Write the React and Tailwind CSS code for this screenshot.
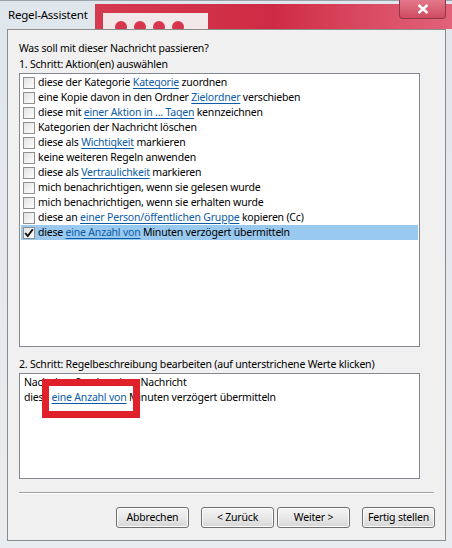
import React from 'react';

const font = { fontFamily: '"Noto Sans", "DejaVu Sans", sans-serif' };

const Link = ({ children }) => (
  <span className="text-[#0a5ca8] underline underline-offset-[2px] decoration-[#0a5ca8]">{children}</span>
);

const actions = [
  [<>diese der Kategorie <Link>Kategorie</Link> zuordnen</>, false],
  [<>eine Kopie davon in den Ordner <Link>Zielordner</Link> verschieben</>, false],
  [<>diese mit <Link>einer Aktion in ... Tagen</Link> kennzeichnen</>, false],
  [<>Kategorien der Nachricht löschen</>, false],
  [<>diese als <Link>Wichtigkeit</Link> markieren</>, false],
  [<>keine weiteren Regeln anwenden</>, false],
  [<>diese als <Link>Vertraulichkeit</Link> markieren</>, false],
  [<>mich benachrichtigen, wenn sie gelesen wurde</>, false],
  [<>mich benachrichtigen, wenn sie erhalten wurde</>, false],
  [<>diese an <Link>einer Person/öffentlichen Gruppe</Link> kopieren (Cc)</>, false],
  [<>diese <Link>eine Anzahl von</Link> Minuten verzögert übermitteln</>, true],
];

const Checkbox = ({ checked }) => (
  <div className="w-[12px] h-[12px] border border-[#8f8f8f] bg-gradient-to-br from-[#e2e2e2] to-white flex items-center justify-center shrink-0">
    {checked && (
      <svg width="10" height="10" viewBox="0 0 10 10">
        <path d="M1.2 5 L3.8 8 L8.8 1.2" fill="none" stroke="#111" strokeWidth="1.9" />
      </svg>
    )}
  </div>
);

const WinButton = ({ children }) => (
  <button className="w-[73px] h-[21px] rounded-[3px] border border-[#707070] bg-gradient-to-b from-[#f4f4f4] via-[#e8e8e8] to-[#d6d6d6] text-[10.5px] tracking-[-0.2px] text-black leading-none whitespace-nowrap shadow-[inset_0_0_0_1px_#fcfcfc]">
    {children}
  </button>
);

export default function App() {
  return (
    <div className="w-[452px] h-[548px] relative overflow-hidden bg-gradient-to-b from-[#dfe6ec] to-[#e9edf0] text-[10.5px] tracking-[-0.2px] text-black" style={font}>
      {/* Title bar (glass with red background behind) */}
      <div className="h-[29px] relative flex">
        <div className="w-[95px] h-full flex items-center pl-[8px] border-t border-[#9aa4ad]">
          <span className="text-[11.5px] tracking-[-0.2px] text-black">Regel-Assistent</span>
        </div>
        <div className="flex-1 h-full pt-[3px] border-t border-[#9aa4ad]">
          <div className="h-full bg-gradient-to-r from-[#d43a50] via-[#cf2a45] to-[#e2627a] pl-[8px] pt-[9px]">
            <div className="w-[105px] h-full bg-[#f2e8ea] flex gap-[7px] pl-[12px] pt-[8px]">
              <div className="w-[12px] h-[12px] rounded-full bg-[#d8364f]" />
              <div className="w-[12px] h-[12px] rounded-full bg-[#d8364f]" />
              <div className="w-[12px] h-[12px] rounded-full bg-[#d8364f]" />
              <div className="w-[12px] h-[12px] rounded-full bg-[#d8364f]" />
            </div>
          </div>
        </div>
        <div className="absolute right-[6px] top-0 w-[47px] h-[19px] rounded-b-[4px] border border-t-0 border-[#8e3a48] bg-gradient-to-b from-[#e3788a] to-[#cf4a60] flex items-center justify-center">
          <svg width="12" height="10" viewBox="0 0 12 10">
            <path d="M1.5 1 L10.5 9 M10.5 1 L1.5 9" stroke="#ffffff" strokeWidth="2.4" />
          </svg>
        </div>
      </div>

      {/* Content panel */}
      <div className="ml-[7px] mr-[6px] h-[512px] bg-[#f0f0f0] border border-[#8c8c8c] px-[11px] pt-[10px] relative">
        <div className="h-[16px] leading-[16px]">Was soll mit dieser Nachricht passieren?</div>
        <div className="h-[17px] leading-[16px]">1. Schritt: Aktion(en) auswählen</div>
        <div className="w-[401px] h-[274px] bg-white border border-[#828790] py-[1px] px-[1px]">
          {actions.map(([label, checked], i) => (
            <div
              key={i}
              className={`h-[15px] flex items-center gap-[3px] pl-[2px] whitespace-nowrap ${checked ? 'bg-[#99c9ef]' : ''}`}
            >
              <Checkbox checked={checked} />
              <span className="leading-[15px]">{label}</span>
            </div>
          ))}
        </div>
        <div className="h-[26px] leading-[16px] pt-[9px] whitespace-nowrap">2. Schritt: Regelbeschreibung bearbeiten (auf unterstrichene Werte klicken)</div>
        <div className="w-[401px] h-[106px] bg-white border border-[#828790] pt-[1px] pl-[4px]">
          <div className="h-[15px] leading-[15px]">Nach dem Senden einer Nachricht</div>
          <div className="h-[15px] leading-[15px]">diese <Link>eine Anzahl von</Link> Minuten verzögert übermitteln</div>
        </div>
        <div className="mt-[13px] w-[415px] border-t border-[#a0a0a0] border-b border-b-white" />
        <div className="mt-[13px] flex w-[415px]">
          <div className="ml-[97px]"><WinButton>Abbrechen</WinButton></div>
          <div className="ml-[12px]"><WinButton>&lt; Zurück</WinButton></div>
          <div className="ml-[3px]"><WinButton>Weiter &gt;</WinButton></div>
          <div className="ml-[12px]"><WinButton>Fertig stellen</WinButton></div>
        </div>
      </div>

      {/* Red annotation frame */}
      <div className="absolute left-[42px] top-[379px] w-[98px] h-[39px] border-[7px] border-[#e0212c]" />
    </div>
  );
}
